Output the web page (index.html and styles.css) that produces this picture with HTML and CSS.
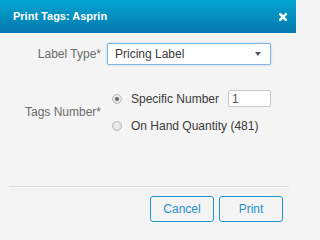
FILE: index.html
```html
<!DOCTYPE html>
<html>
<head>
<meta charset="utf-8">
<link rel="stylesheet" href="styles.css">
</head>
<body>
<div class="dialog">
  <header class="dlg-head">
    <h1 class="dlg-title">Print Tags: Asprin</h1>
    <span class="close" aria-label="Close">
      <svg width="8" height="8" viewBox="0 0 8 8"><path d="M1.2 1.2 L6.8 6.8 M6.8 1.2 L1.2 6.8" stroke="#fff" stroke-width="2.4" stroke-linecap="square"/></svg>
    </span>
  </header>
  <div class="dlg-body">
    <div class="row row-select">
      <label class="lbl">Label Type*</label>
      <div class="select">Pricing Label<span class="caret"></span></div>
    </div>
    <div class="row row-tags">
      <label class="lbl">Tags Number*</label>
      <div class="radios">
        <div class="radio-row">
          <span class="radio checked"></span>
          <span class="opt">Specific Number</span>
          <span class="num-input">1</span>
        </div>
        <div class="radio-row second">
          <span class="radio"></span>
          <span class="opt">On Hand Quantity (481)</span>
        </div>
      </div>
    </div>
  </div>
  <div class="dlg-foot">
    <button class="btn">Cancel</button>
    <button class="btn">Print</button>
  </div>
</div>
</body>
</html>
```
FILE: styles.css
```css
html, body {
  margin: 0;
  padding: 0;
}
body {
  width: 296px;
  height: 234px;
  overflow: hidden;
  background: #f4f4f4;
  font-family: "Liberation Sans", Arial, sans-serif;
  font-size: 12px;
}
.dialog {
  width: 296px;
  height: 234px;
  background: #f4f4f4;
}
.dlg-head {
  height: 33px;
  background: linear-gradient(#03a5d2, #0678ad);
  display: flex;
  align-items: center;
  justify-content: space-between;
  padding: 0 9px 0 13px;
  box-sizing: border-box;
}
.dlg-title {
  margin: 0;
  color: #fff;
  font-size: 11px;
  font-weight: bold;
  line-height: 1;
}
.close {
  display: flex;
  margin-top: 1px;
}
.dlg-body {
  padding: 10px 25px 52px 0;
}
.row {
  display: grid;
  grid-template-columns: 101px 1fr;
  column-gap: 6px;
  align-items: center;
}
.lbl {
  text-align: right;
  color: #6b6b6b;
  white-space: nowrap;
}
.select {
  height: 22px;
  box-sizing: border-box;
  background: #fff;
  border: 1px solid #7fb6e6;
  border-radius: 2px;
  box-shadow: 0 0 2px rgba(102, 160, 230, 0.6);
  display: flex;
  align-items: center;
  padding-left: 7px;
  color: #3a3a3a;
  position: relative;
}
.caret {
  position: absolute;
  right: 9px;
  top: 8px;
  width: 0;
  height: 0;
  border-left: 3px solid transparent;
  border-right: 3px solid transparent;
  border-top: 4px solid #555;
}
.row-tags {
  margin-top: 25px;
}
.radios {
  display: flex;
  flex-direction: column;
  padding-left: 5px;
}
.radio-row {
  display: flex;
  align-items: center;
  height: 17px;
  color: #3a3a3a;
}
.radio-row.second {
  margin-top: 10px;
}
.radio {
  width: 10px;
  height: 10px;
  box-sizing: border-box;
  border-radius: 50%;
  border: 1px solid #bdbdbd;
  background: radial-gradient(circle at 50% 40%, #f4f4f4, #d6d6d6);
  margin-right: 9px;
  display: flex;
  align-items: center;
  justify-content: center;
}
.radio.checked::after {
  content: "";
  width: 4px;
  height: 4px;
  border-radius: 50%;
  background: #666;
}
.num-input {
  margin-left: auto;
  width: 43px;
  height: 17px;
  box-sizing: border-box;
  border: 1px solid #c8c8c8;
  border-radius: 2px;
  background: #fff;
  color: #555;
  padding-left: 3px;
  display: flex;
  align-items: center;
}
.dlg-foot {
  margin: 0 7px 0 9px;
  border-top: 1px solid #dcdcdc;
  padding: 9px 6px 0 0;
  display: flex;
  justify-content: flex-end;
  gap: 5px;
}
.btn {
  width: 64px;
  height: 26px;
  margin: 0;
  padding: 0;
  background: transparent;
  border: 1px solid #1e95d2;
  border-radius: 3px;
  color: #2a8ecb;
  font-family: "Liberation Sans", Arial, sans-serif;
  font-size: 12px;
}
```
